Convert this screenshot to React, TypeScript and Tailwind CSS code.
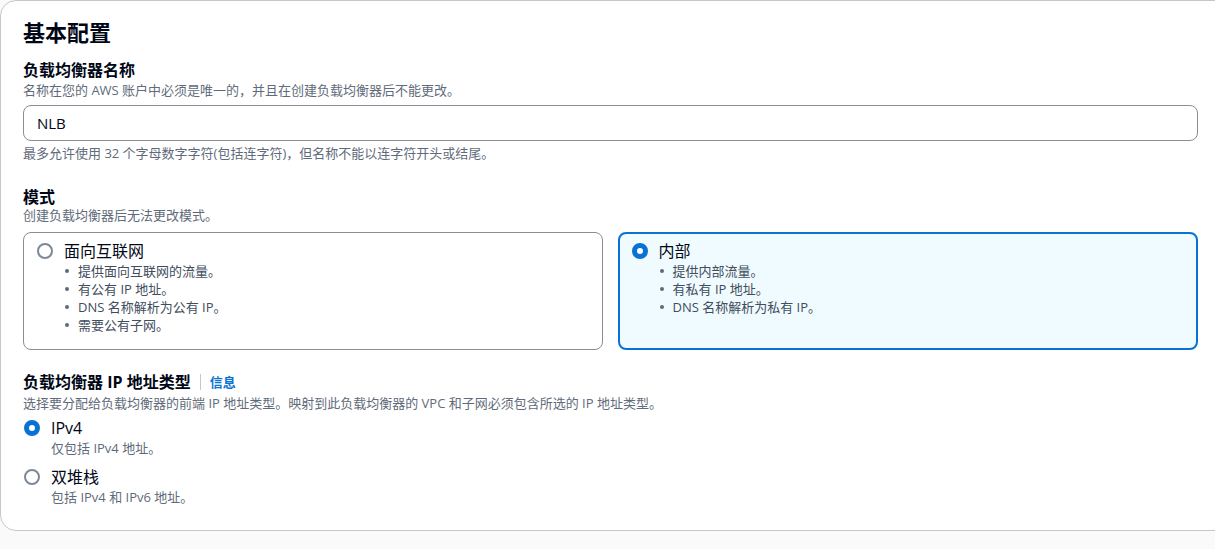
import React, { useState } from 'react'

type Scheme = 'internet' | 'internal'
type IpType = 'ipv4' | 'dual'

function Radio({ checked }: { checked: boolean }) {
  return checked ? (
    <span className="block w-4 h-4 shrink-0 rounded-full border-[5px] border-[#0972d3] bg-white" />
  ) : (
    <span className="block w-4 h-4 shrink-0 rounded-full border-2 border-[#7d8998] bg-white" />
  )
}

function Bullets({ items }: { items: string[] }) {
  return (
    <ul className="mt-[1px]">
      {items.map((t) => (
        <li key={t} className="flex items-center text-[13px] leading-[18px] text-[#414d5c]">
          <span className="ml-[1px] mr-[9px] w-[4px] h-[4px] rounded-full bg-[#5f6b7a]" />
          {t}
        </li>
      ))}
    </ul>
  )
}

export default function App() {
  const [name, setName] = useState('NLB')
  const [scheme, setScheme] = useState<Scheme>('internal')
  const [ipType, setIpType] = useState<IpType>('ipv4')

  const cardClass = (on: boolean) =>
    on
      ? 'flex-1 h-[118px] rounded-lg border-2 border-[#0972d3] bg-[#f0fbff] pl-[12px] pt-[7px] cursor-pointer'
      : 'flex-1 h-[118px] rounded-lg border border-[#8c8c94] bg-white pl-[13px] pt-[8px] cursor-pointer'

  return (
    <div className="w-[1215px] h-[549px] overflow-hidden bg-[#fafafa] font-['Open_Sans','Noto_Sans_CJK_SC',sans-serif] text-[#000716]">
      <div className="w-[1240px] bg-white border border-[#c6c6cd] rounded-2xl pl-[22px] pr-[41px] pt-[16px] pb-[24px]">
        <h2 className="text-[22px] leading-[30px] font-bold">基本配置</h2>

        <div className="mt-[14px] text-[16px] leading-[18px] font-bold">负载均衡器名称</div>
        <div className="mt-[2px] text-[13px] leading-[18px] text-[#5f6b7a]">
          名称在您的 AWS 账户中必须是唯一的，并且在创建负载均衡器后不能更改。
        </div>
        <input
          value={name}
          onChange={(e) => setName(e.target.value)}
          className="mt-[6px] block w-full h-[36px] rounded-lg border border-[#8c8c94] px-[13px] text-[15px] outline-none"
        />
        <div className="mt-[3px] text-[13px] leading-[18px] text-[#5f6b7a]">
          最多允许使用 32 个字母数字字符(包括连字符)，但名称不能以连字符开头或结尾。
        </div>

        <div className="mt-[26px] text-[16px] leading-[18px] font-bold">模式</div>
        <div className="text-[13px] leading-[18px] text-[#5f6b7a]">创建负载均衡器后无法更改模式。</div>
        <div className="mt-[8px] flex gap-[15px]">
          <div className={cardClass(scheme === 'internet')} onClick={() => setScheme('internet')}>
            <div className="flex items-center gap-[11px]">
              <Radio checked={scheme === 'internet'} />
              <span className="text-[16px] leading-[20px]">面向互联网</span>
            </div>
            <div className="pl-[27px]">
              <Bullets items={['提供面向互联网的流量。', '有公有 IP 地址。', 'DNS 名称解析为公有 IP。', '需要公有子网。']} />
            </div>
          </div>
          <div className={cardClass(scheme === 'internal')} onClick={() => setScheme('internal')}>
            <div className="flex items-center gap-[11px]">
              <Radio checked={scheme === 'internal'} />
              <span className="text-[16px] leading-[20px]">内部</span>
            </div>
            <div className="pl-[27px]">
              <Bullets items={['提供内部流量。', '有私有 IP 地址。', 'DNS 名称解析为私有 IP。']} />
            </div>
          </div>
        </div>

        <div className="mt-[23px] flex items-center text-[16px] leading-[18px] font-bold">
          负载均衡器 IP 地址类型
          <span className="ml-[9px] h-[16px] border-l border-[#c6c6cd]" />
          <a className="ml-[9px] text-[13px] text-[#0972d3] font-bold cursor-pointer">信息</a>
        </div>
        <div className="mt-[3px] text-[13px] leading-[18px] text-[#5f6b7a]">
          选择要分配给负载均衡器的前端 IP 地址类型。映射到此负载均衡器的 VPC 和子网必须包含所选的 IP 地址类型。
        </div>

        <div className="mt-[6px] cursor-pointer" onClick={() => setIpType('ipv4')}>
          <div className="flex items-center gap-[11px] pl-[1px]">
            <Radio checked={ipType === 'ipv4'} />
            <span className="text-[16px] leading-[20px]">IPv4</span>
          </div>
          <div className="pl-[28px] mt-[1px] text-[13px] leading-[18px] text-[#5f6b7a]">仅包括 IPv4 地址。</div>
        </div>
        <div className="mt-[10px] cursor-pointer" onClick={() => setIpType('dual')}>
          <div className="flex items-center gap-[11px] pl-[1px]">
            <Radio checked={ipType === 'dual'} />
            <span className="text-[16px] leading-[20px]">双堆栈</span>
          </div>
          <div className="pl-[28px] mt-[1px] text-[13px] leading-[18px] text-[#5f6b7a]">包括 IPv4 和 IPv6 地址。</div>
        </div>
      </div>
    </div>
  )
}
